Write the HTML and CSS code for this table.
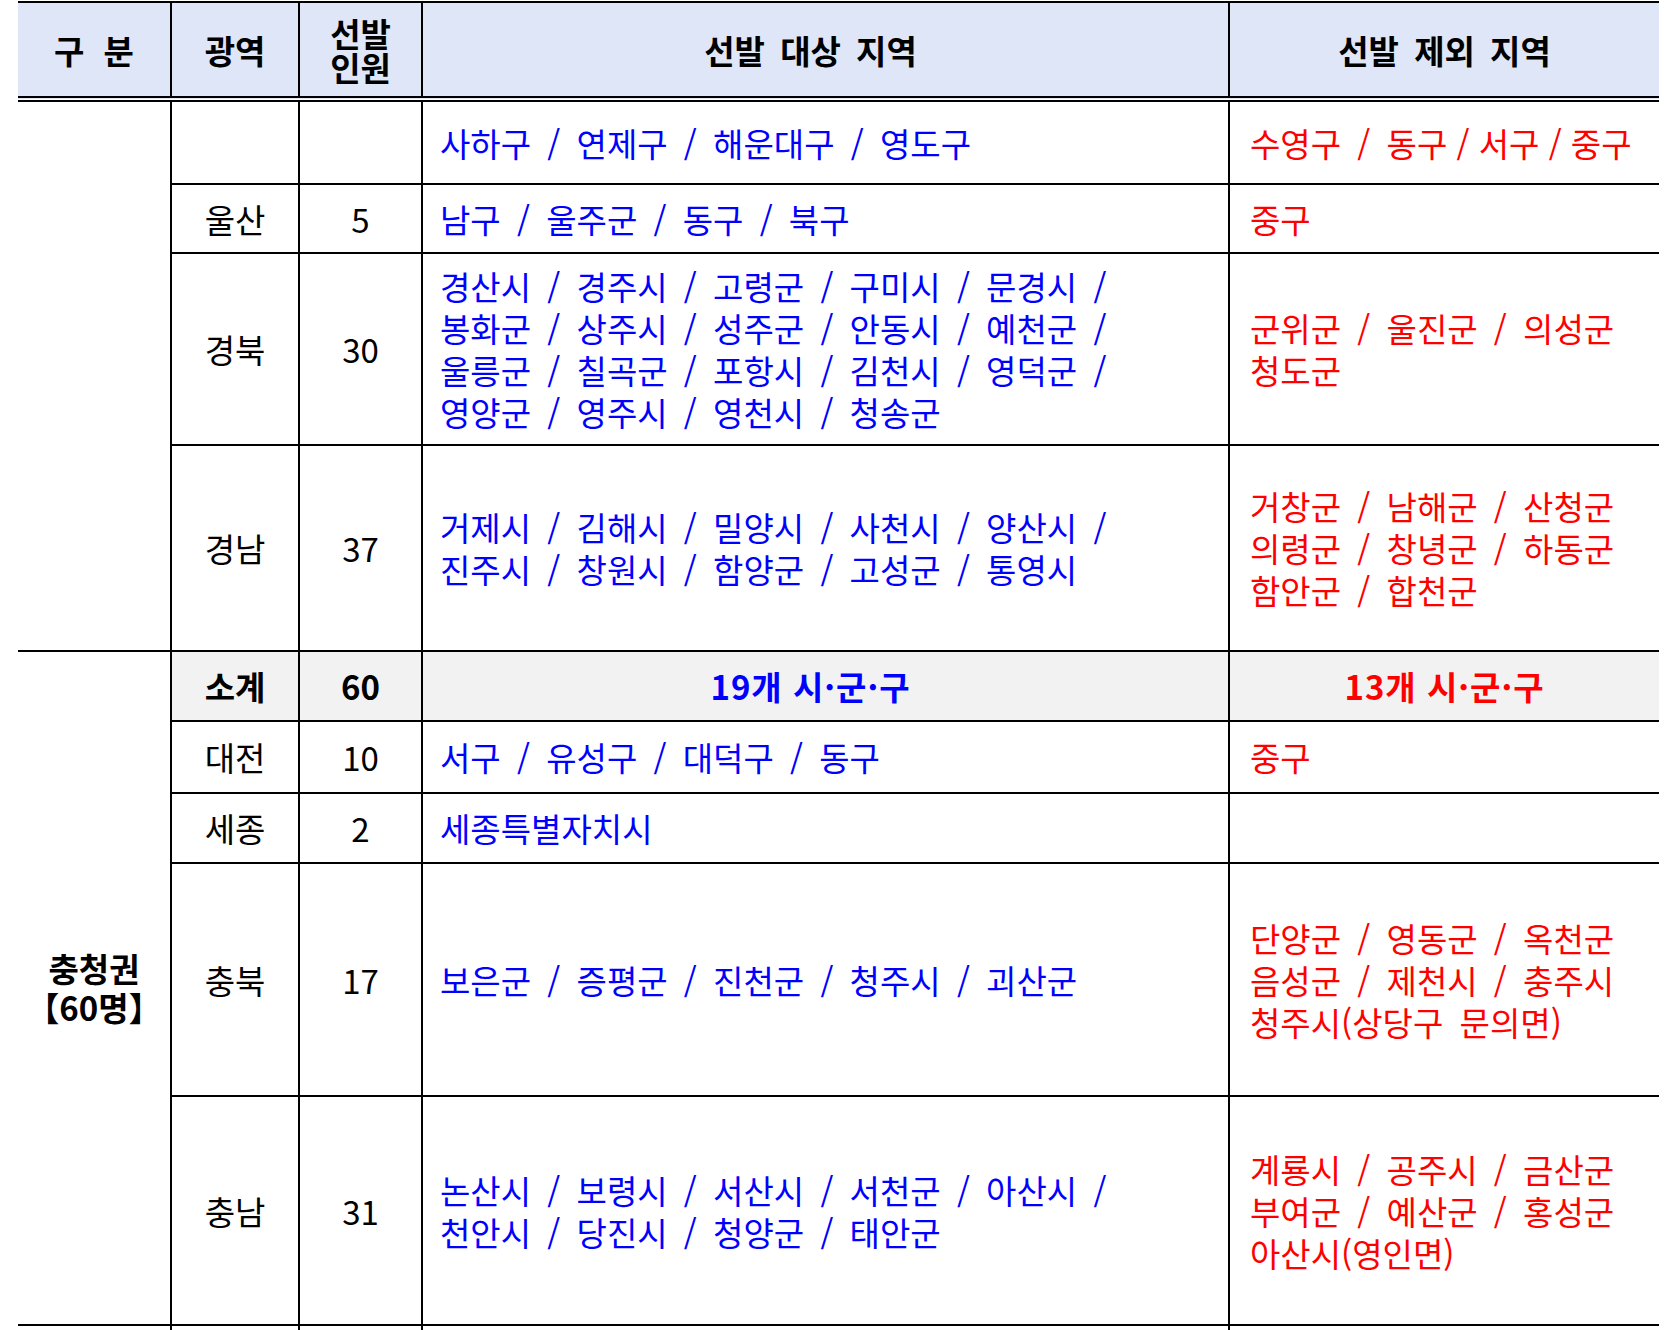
FILE: index.html
```html
<!DOCTYPE html>
<html lang="ko">
<head>
<meta charset="utf-8">
<title>선발 지역</title>
<link rel="stylesheet" href="styles.css">
</head>
<body>
<div class="page">
<table class="regions">
  <colgroup>
    <col class="c-group">
    <col class="c-area">
    <col class="c-num">
    <col class="c-ok">
    <col class="c-no">
  </colgroup>
  <thead>
    <tr class="r-head">
      <th class="group gubun">구 분</th>
      <th>광역</th>
      <th class="two">선발<br>인원</th>
      <th class="shift">선발 대상 지역</th>
      <th class="last">선발 제외 지역</th>
    </tr>
  </thead>
  <tbody>
    <tr class="r-busan">
      <td class="group" rowspan="4"></td>
      <td class="area"></td>
      <td class="num"></td>
      <td class="ok">사하구 / 연제구 / 해운대구 / 영도구</td>
      <td class="no last">수영구 / <span class="tight">동구 / 서구 / 중구</span></td>
    </tr>
    <tr class="r-ulsan">
      <td class="area">울산</td>
      <td class="num">5</td>
      <td class="ok">남구 / 울주군 / 동구 / 북구</td>
      <td class="no last">중구</td>
    </tr>
    <tr class="r-gb">
      <td class="area">경북</td>
      <td class="num">30</td>
      <td class="ok">경산시 / 경주시 / 고령군 / 구미시 / 문경시 /<br>봉화군 / 상주시 / 성주군 / 안동시 / 예천군 /<br>울릉군 / 칠곡군 / 포항시 / 김천시 / 영덕군 /<br>영양군 / 영주시 / 영천시 / 청송군</td>
      <td class="no last">군위군 / 울진군 / 의성군<br>청도군</td>
    </tr>
    <tr class="r-gn">
      <td class="area">경남</td>
      <td class="num">37</td>
      <td class="ok">거제시 / 김해시 / 밀양시 / 사천시 / 양산시 /<br>진주시 / 창원시 / 함양군 / 고성군 / 통영시</td>
      <td class="no last">거창군 / 남해군 / 산청군<br>의령군 / 창녕군 / 하동군<br>함안군 / 합천군</td>
    </tr>
    <tr class="r-sub">
      <td class="group label" rowspan="5"><span class="label-line">충청권</span><span class="label-line"><span class="bl">【</span>60명<span class="br">】</span></span></td>
      <td class="area sub strong">소계</td>
      <td class="num sub strong">60</td>
      <td class="ok sub strong center shift">19개 시·군·구</td>
      <td class="no sub strong center last">13개 시·군·구</td>
    </tr>
    <tr class="r-dj">
      <td class="area">대전</td>
      <td class="num">10</td>
      <td class="ok">서구 / 유성구 / 대덕구 / 동구</td>
      <td class="no last">중구</td>
    </tr>
    <tr class="r-sj">
      <td class="area">세종</td>
      <td class="num">2</td>
      <td class="ok">세종특별자치시</td>
      <td class="no last"></td>
    </tr>
    <tr class="r-cb">
      <td class="area">충북</td>
      <td class="num">17</td>
      <td class="ok">보은군 / 증평군 / 진천군 / 청주시 / 괴산군</td>
      <td class="no last">단양군 / 영동군 / 옥천군<br>음성군 / 제천시 / 충주시<br>청주시(상당구 문의면)</td>
    </tr>
    <tr class="r-cn">
      <td class="area">충남</td>
      <td class="num">31</td>
      <td class="ok">논산시 / 보령시 / 서산시 / 서천군 / 아산시 /<br>천안시 / 당진시 / 청양군 / 태안군</td>
      <td class="no last">계룡시 / 공주시 / 금산군<br>부여군 / 예산군 / 홍성군<br>아산시(영인면)</td>
    </tr>
    <tr class="r-tail">
      <td class="group"></td>
      <td class="area"></td>
      <td class="num"></td>
      <td class="ok"></td>
      <td class="no last"></td>
    </tr>
  </tbody>
</table>
</div>
</body>
</html>
```

FILE: styles.css
```css
html, body {
  margin: 0;
  padding: 0;
  background: #ffffff;
  overflow: hidden;
}

body {
  font-family: "Noto Sans CJK KR", "Noto Sans", sans-serif;
  color: #000000;
}

.page {
  padding: 1px 0 0 18px;
}

.regions {
  border-collapse: collapse;
  table-layout: fixed;
  width: 1641px;
}

.c-group { width: 153px; }
.c-area { width: 128px; }
.c-num { width: 123px; }
.c-ok { width: 807px; }
.c-no { width: 430px; }

.regions th,
.regions td {
  border: 2px solid #000000;
  vertical-align: middle;
  padding: 0;
  white-space: nowrap;
}

.regions .group {
  border-left: none;
}

.regions .last {
  border-right: none;
}

.regions th {
  background: #dee6f7;
  font-size: 33px;
  font-weight: 700;
  line-height: 34px;
  text-align: center;
  word-spacing: 6px;
  border-bottom: 6px double #000000;
}

.regions .gubun {
  word-spacing: 10px;
}

.r-head { height: 97px; }
.r-busan { height: 85px; }
.r-ulsan { height: 69px; }
.r-gb { height: 192px; }
.r-gn { height: 206px; }
.r-sub { height: 70px; }
.r-dj { height: 72px; }
.r-sj { height: 70px; }
.r-cb { height: 233px; }
.r-cn { height: 229px; }
.r-tail { height: 60px; }

.regions .area,
.regions .num {
  text-align: center;
  font-size: 33px;
  line-height: 40px;
}

.regions .ok,
.regions .no {
  font-size: 33px;
  line-height: 42px;
  word-spacing: 7px;
  text-align: left;
}

.regions .ok { color: #0000ff; padding-left: 17px; }
.regions .no { color: #ff0000; padding-left: 20px; }

.tight { word-spacing: 0; }

.regions .sub { background: #f2f2f2; }

.strong { font-weight: 700; }

.regions .center {
  text-align: center;
  padding-left: 0;
  word-spacing: 0;
  letter-spacing: 1px;
  font-size: 33px;
}

.regions .shift {
  padding-right: 30px;
}

.regions .label {
  text-align: center;
  font-size: 33px;
  font-weight: 700;
  line-height: 39px;
}

.label-line {
  display: block;
}

.bl { margin-left: -0.42em; }
.br { margin-right: -0.42em; }
```
